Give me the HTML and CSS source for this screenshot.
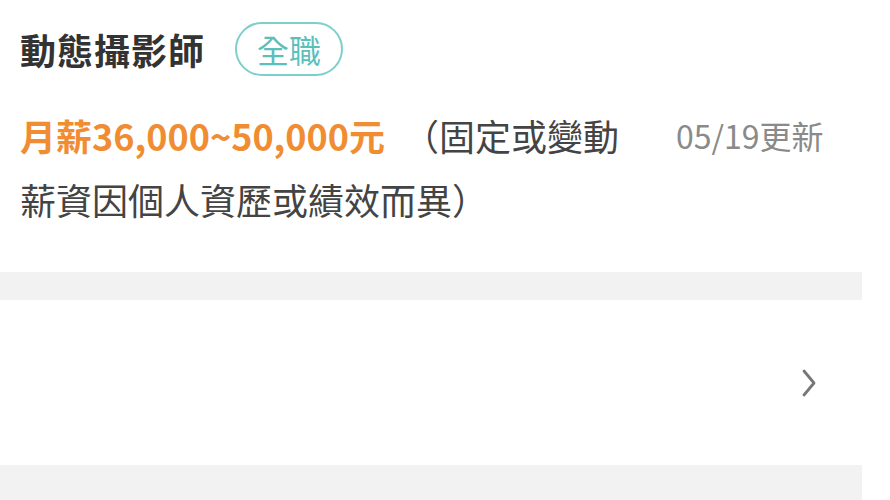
FILE: index.html
```html
<!DOCTYPE html>
<html lang="zh-Hant">
<head>
    <meta charset="UTF-8">
    <meta name="viewport" content="width=device-width, initial-scale=1.0">
    <title>動態攝影師</title>
    <link rel="stylesheet" href="styles.css">
</head>
<body>
    <div class="page">
        <div class="job-card">
            <div class="job-head">
                <h1>動態攝影師</h1>
                <span class="tag">全職</span>
            </div>
            <div class="salary-row">
                <p class="salary"><b>月薪36,000~50,000元</b><span>（固定或變動</span><br><span>薪資因個人資歷或績效而異）</span></p>
                <span class="updated">05/19更新</span>
            </div>
        </div>
        <div class="divider"></div>
        <div class="link-row">
            <svg class="chevron" width="18" height="30" viewBox="0 0 18 30">
                <path d="M4 3 L14 15 L4 27" fill="none" stroke="#777" stroke-width="2.8" stroke-linecap="round" stroke-linejoin="round"/>
            </svg>
        </div>
        <div class="divider bottom"></div>
    </div>
</body>
</html>
```

FILE: styles.css
```css
body {
    margin: 0;
    padding: 0;
    background: #fff;
    font-family: "Noto Sans CJK TC", "Noto Sans", sans-serif;
}
.page {
    width: 862px;
}
.job-card {
    padding: 22px 20px 41px 20px;
}
.job-head {
    display: flex;
    align-items: center;
    gap: 30px;
}
h1 {
    margin: 0;
    font-size: 36px;
    font-weight: 700;
    color: #333;
    letter-spacing: 1px;
}
.tag {
    display: inline-block;
    border: 2px solid #7ccfcb;
    border-radius: 28px;
    padding: 0 20px;
    font-size: 32px;
    color: #5cbfbb;
    line-height: 50px;
}
.salary-row {
    display: flex;
    align-items: flex-start;
    margin-top: 27px;
}
.salary {
    margin: 0;
    width: 610px;
    font-size: 36px;
    line-height: 64px;
    color: #444;
}
.salary b {
    color: #f08d32;
    font-weight: 700;
    margin-right: 18px;
}
.updated {
    margin-left: 46px;
    font-size: 32px;
    line-height: 64px;
    color: #8a8a8a;
}
.divider {
    height: 28px;
    background: #f2f2f2;
}
.link-row {
    height: 165px;
    display: flex;
    align-items: center;
    justify-content: flex-end;
    padding-right: 44px;
}
.divider.bottom {
    height: 40px;
}
```
